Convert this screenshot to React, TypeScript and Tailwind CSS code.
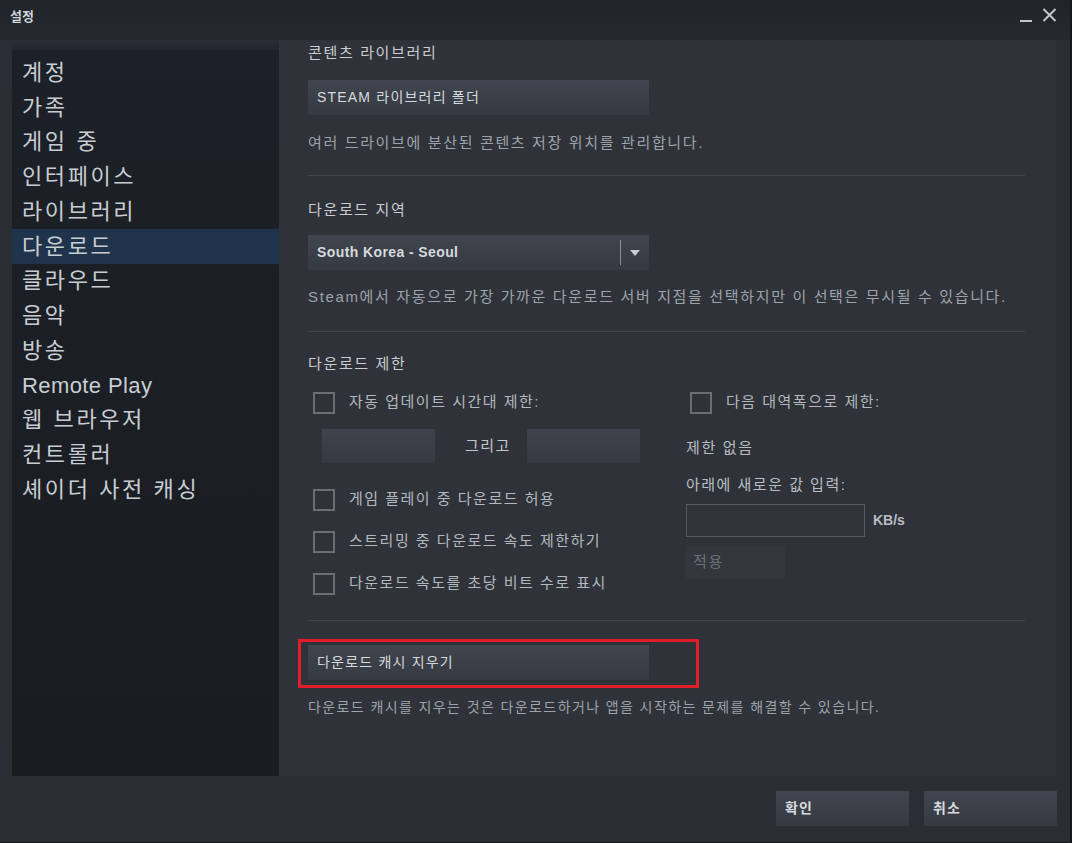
import React from "react";

const menu = [
  "계정",
  "가족",
  "게임 중",
  "인터페이스",
  "라이브러리",
  "다운로드",
  "클라우드",
  "음악",
  "방송",
  "Remote Play",
  "웹 브라우저",
  "컨트롤러",
  "셰이더 사전 캐싱",
];

function Checkbox({ label }: { label: string }) {
  return (
    <div className="flex items-center h-[21px]">
      <div className="w-[22px] h-[22px] border-2 border-[#6a6e75] shrink-0" />
      <span className="ml-[14px] text-[#b3b8be] tracking-[1.5px]">{label}</span>
    </div>
  );
}

function Button({ children, w = "w-[341px]" }: { children: React.ReactNode; w?: string }) {
  return (
    <div
      className={`${w} h-[35px] flex items-center pl-[9px] bg-gradient-to-b from-[#41454f] to-[#353941] text-[14px] text-[#d6dade] tracking-[1.2px]`}
    >
      {children}
    </div>
  );
}

function Separator() {
  return <div className="h-px bg-[#40444b]" />;
}

export default function App() {
  return (
    <div
      className="w-[1072px] h-[843px] flex flex-col bg-[#2a2d33] border-r-2 border-b border-[#15171a] text-[15px] tracking-[1.65px]"
      style={{ fontFamily: '"Liberation Sans", "Noto Sans CJK KR", sans-serif' }}
    >
      {/* title bar */}
      <div className="h-[40px] shrink-0 flex items-start justify-between bg-gradient-to-b from-[#1f232a] to-[#252930] pl-[10px] pr-[13px]">
        <span className="mt-[7px] text-[13px] font-bold tracking-normal text-[#d2d6da]">설정</span>
        <div className="flex items-start gap-[10px] mt-[8px]">
          <div className="mt-[12px] w-[12px] h-[2px] bg-[#c3c7cc]" />
          <svg width="15" height="14" viewBox="0 0 15 14">
            <path d="M1.5 1 L13.5 13 M13.5 1 L1.5 13" stroke="#c3c7cc" strokeWidth="2" />
          </svg>
        </div>
      </div>

      {/* body */}
      <div className="h-[736px] shrink-0 flex pl-[12px] pr-[14px]">
        {/* sidebar */}
        <div className="w-[267px] shrink-0 flex flex-col bg-gradient-to-b from-[#1c2028] to-[#1a1c20]">
          <div className="h-[10px] bg-gradient-to-b from-[#2a2e37] to-[#20242c]" />
          <div className="mt-[5px] flex flex-col">
            {menu.map((m) => (
              <div
                key={m}
                className={`h-[34.75px] flex items-center pl-[10px] text-[22px] text-[#c8cdd2] ${
                  m === "Remote Play" ? "tracking-[0.4px]" : "tracking-[2.6px]"
                } ${m === "다운로드" ? "bg-[#1f344c]" : ""}`}
              >
                {m}
              </div>
            ))}
          </div>
        </div>

        {/* content */}
        <div className="flex-1 bg-[#2f3239] pl-[29px] pr-[31px] pt-[3px] flex flex-col">
          <div className="h-5 leading-5 text-[#c9cdd2]">콘텐츠 라이브러리</div>
          <div className="mt-[17px]">
            <Button>STEAM 라이브러리 폴더</Button>
          </div>
          <div className="mt-[18px] h-5 leading-5 text-[#9da3a9]">
            여러 드라이브에 분산된 콘텐츠 저장 위치를 관리합니다.
          </div>
          <div className="mt-[22px]">
            <Separator />
          </div>

          <div className="mt-[24px] h-5 leading-5 text-[#c9cdd2]">다운로드 지역</div>
          <div className="mt-[15px] w-[341px] h-[35px] flex items-center bg-gradient-to-b from-[#41454f] to-[#353941]">
            <span className="flex-1 pl-[9px] text-[14px] font-bold tracking-[0.4px] text-[#d6dade]">
              South Korea - Seoul
            </span>
            <div className="w-px h-[25px] bg-[#8a8f96]" />
            <div className="w-[28px] flex justify-center">
              <svg width="10" height="6" viewBox="0 0 10 6">
                <path d="M0 0 L10 0 L5 6 Z" fill="#c9cdd2" />
              </svg>
            </div>
          </div>
          <div className="mt-[17px] h-5 leading-5 text-[#9da3a9]">
            Steam에서 자동으로 가장 가까운 다운로드 서버 지점을 선택하지만 이 선택은 무시될 수 있습니다.
          </div>
          <div className="mt-[24px]">
            <Separator />
          </div>

          <div className="mt-[22px] h-5 leading-5 text-[#c9cdd2]">다운로드 제한</div>
          <div className="mt-[18px] flex">
            <div className="w-[378px] flex flex-col">
              <div className="pl-[5px]">
                <Checkbox label="자동 업데이트 시간대 제한:" />
              </div>
              <div className="mt-[16px] pl-[14px] flex items-center">
                <div className="w-[113px] h-[34px] bg-gradient-to-b from-[#3f434d] to-[#353941]" />
                <span className="w-[92px] pl-[30px] tracking-[1.5px] text-[#c3c8ce]">그리고</span>
                <div className="w-[113px] h-[34px] bg-gradient-to-b from-[#3f434d] to-[#353941]" />
              </div>
              <div className="mt-[26px] pl-[5px] flex flex-col gap-[21px]">
                <Checkbox label="게임 플레이 중 다운로드 허용" />
                <Checkbox label="스트리밍 중 다운로드 속도 제한하기" />
                <Checkbox label="다운로드 속도를 초당 비트 수로 표시" />
              </div>
            </div>
            <div className="flex flex-col">
              <div className="pl-[4px]">
                <Checkbox label="다음 대역폭으로 제한:" />
              </div>
              <div className="mt-[25px] h-5 leading-5 text-[#b8bdc3]">제한 없음</div>
              <div className="mt-[17px] h-5 leading-5 tracking-[1.5px] text-[#b8bdc3]">아래에 새로운 값 입력:</div>
              <div className="mt-[9px] flex items-center">
                <div className="w-[179px] h-[33px] border border-[#575b62] bg-[#30333a]" />
                <span className="ml-[8px] text-[14px] font-bold tracking-normal text-[#b8bdc3]">KB/s</span>
              </div>
              <div className="mt-[9px] w-[99px] h-[33px] flex items-center pl-[7px] bg-[#33363d] text-[#6c7179]">
                적용
              </div>
            </div>
          </div>
          <div className="mt-[26px]">
            <Separator />
          </div>

          <div className="mt-[18px] -ml-[10px] w-[401px] h-[49px] border-[3px] border-[#e11d2b] pl-[7px] pt-[3px]">
            <Button>다운로드 캐시 지우기</Button>
          </div>
          <div className="mt-[9px] h-5 leading-5 text-[14px] tracking-[1.4px] text-[#9da3a9]">
            다운로드 캐시를 지우는 것은 다운로드하거나 앱을 시작하는 문제를 해결할 수 있습니다.
          </div>
        </div>
      </div>

      {/* footer */}
      <div className="flex-1 flex justify-end items-start pt-[15px] pr-[13px] gap-[15px] bg-[#2a2d33]">
        <Button w="w-[133px]">
          <span className="font-bold">확인</span>
        </Button>
        <Button w="w-[133px]">
          <span className="font-bold">취소</span>
        </Button>
      </div>
    </div>
  );
}
